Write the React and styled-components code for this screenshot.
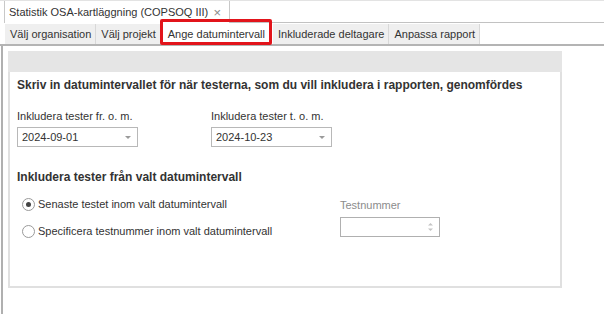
import React, { useState } from 'react';
import styled, { createGlobalStyle } from 'styled-components';

const Global = createGlobalStyle`
    html, body { margin:0; padding:0; background:#fff; }
    body { font-family:"Liberation Sans", Arial, sans-serif; font-size:11px; color:#333; }
`;

const Screen = styled.div`
    width:604px; height:314px; display:flex; flex-direction:column; overflow:hidden;
    border-top:1px solid #e3e3e3; box-sizing:border-box;
`;

const DocBar = styled.div`
    display:flex; height:22px; padding-left:4px;
    .fill { flex:1; border-bottom:1px solid #c2c2c2; }
`;

const DocTab = styled.div`
    display:flex; align-items:center; width:226px; box-sizing:border-box;
    padding:0 6px 0 4px; border:1px solid #c8c8c8; border-top:none; border-bottom:none;
    background:#fff;
    span { flex:1; white-space:nowrap; }
    .close { flex:none; color:#8a8a8a; font-size:13px; font-weight:normal; margin-right:2px; }
`;

const TabStrip = styled.div`
    display:flex; height:20px; padding-left:5px; margin-top:1px;
    border-bottom:2px solid #b4b4b4;
`;

const Tab = styled.div`
    display:flex; align-items:center; padding:0 4px 0 5px; white-space:nowrap;
    background:${p => p.$active ? '#fff' : '#efefef'};
    border-right:1px solid #d8d8d8;
    box-sizing:border-box; position:relative;
    ${p => p.$active && `
        margin:0 2px 0 1px; padding:0 5px 0 6px;
        &::after { content:""; position:absolute; left:-2px; right:-2px; top:-5px; bottom:-1px;
            border:3px solid #e2141b; border-radius:2px; }
    `}
`;

const Body = styled.div`
    flex:1; border-left:2px solid #b0b0b0; margin-left:1px;
    padding:5px 0 0 5px;
`;

const Panel = styled.div`
    width:554px; display:flex; flex-direction:column;
`;

const PanelHead = styled.div`
    height:21px; background:#e5e5e5;
`;

const PanelBody = styled.div`
    height:216px; box-sizing:border-box;
    border:2px solid #e0e0e0; border-top:none;
    padding:5px 0 0 7px;
`;

const Title = styled.div`
    font-weight:bold; font-size:12px; color:#333; line-height:16px;
    margin-top:${p => p.$top || 0}px;
`;

const FieldRow = styled.div`
    display:flex; gap:73px; margin-top:16px;
`;

const Field = styled.div`
    display:flex; flex-direction:column; gap:4px;
    label { line-height:14px; color:#333; }
`;

const Combo = styled.div`
    width:121px; height:20px; box-sizing:border-box; border:1px solid #b8b8b8;
    display:flex; align-items:center; justify-content:space-between; padding:0 6px 0 4px;
    .arrow { width:0; height:0; border-left:3px solid transparent; border-right:3px solid transparent;
        border-top:3px solid #9a9a9a; }
`;

const Options = styled.div`
    display:flex; margin-top:12px;
`;

const RadioList = styled.div`
    display:flex; flex-direction:column; gap:12px; padding-left:5px; width:318px;
`;

const Radio = styled.label`
    display:flex; align-items:center; gap:3px; line-height:15px;
    .dot { width:13px; height:13px; box-sizing:border-box; border-radius:50%;
        border:1px solid #9a9a9a; display:flex; align-items:center; justify-content:center; }
    .dot i { width:5px; height:5px; border-radius:50%; background:#444; }
`;

const NumField = styled.div`
    display:flex; flex-direction:column; gap:5px; margin-top:1px;
    label { color:#8c8c8c; line-height:14px; }
`;

const Spin = styled.div`
    width:100px; height:20px; box-sizing:border-box; border:1px solid #b0b0b0;
    display:flex; justify-content:flex-end; align-items:center; padding-right:5px;
    svg { display:block; }
`;

const tabs = ['Välj organisation', 'Välj projekt', 'Ange datumintervall', 'Inkluderade deltagare', 'Anpassa rapport'];

const App = () => {
    const [mode, setMode] = useState(0);
    return (
        <Screen>
            <Global />
            <DocBar>
                <DocTab>
                    <span>Statistik OSA-kartläggning (COPSOQ III)</span>
                    <b className="close">×</b>
                </DocTab>
                <div className="fill" />
            </DocBar>
            <TabStrip>
                {tabs.map((t, i) => <Tab key={t} $active={i === 2}>{t}</Tab>)}
            </TabStrip>
            <Body>
                <Panel>
                    <PanelHead />
                    <PanelBody>
                        <Title>Skriv in datumintervallet för när testerna, som du vill inkludera i rapporten, genomfördes</Title>
                        <FieldRow>
                            <Field>
                                <label>Inkludera tester fr. o. m.</label>
                                <Combo>2024-09-01<span className="arrow" /></Combo>
                            </Field>
                            <Field>
                                <label>Inkludera tester t. o. m.</label>
                                <Combo>2024-10-23<span className="arrow" /></Combo>
                            </Field>
                        </FieldRow>
                        <Title $top={22}>Inkludera tester från valt datumintervall</Title>
                        <Options>
                            <RadioList>
                                <Radio onClick={() => setMode(0)}>
                                    <span className="dot">{mode === 0 && <i />}</span>
                                    Senaste testet inom valt datumintervall
                                </Radio>
                                <Radio onClick={() => setMode(1)}>
                                    <span className="dot">{mode === 1 && <i />}</span>
                                    Specificera testnummer inom valt datumintervall
                                </Radio>
                            </RadioList>
                            <NumField>
                                <label>Testnummer</label>
                                <Spin>
                                    <svg width="7" height="12" viewBox="0 0 7 12">
                                        <path d="M1 4.5 L3.5 2 L6 4.5Z" fill="#c4c4c4" />
                                        <path d="M1 7.5 L3.5 10 L6 7.5Z" fill="#c4c4c4" />
                                    </svg>
                                </Spin>
                            </NumField>
                        </Options>
                    </PanelBody>
                </Panel>
            </Body>
        </Screen>
    );
};

export default App;
